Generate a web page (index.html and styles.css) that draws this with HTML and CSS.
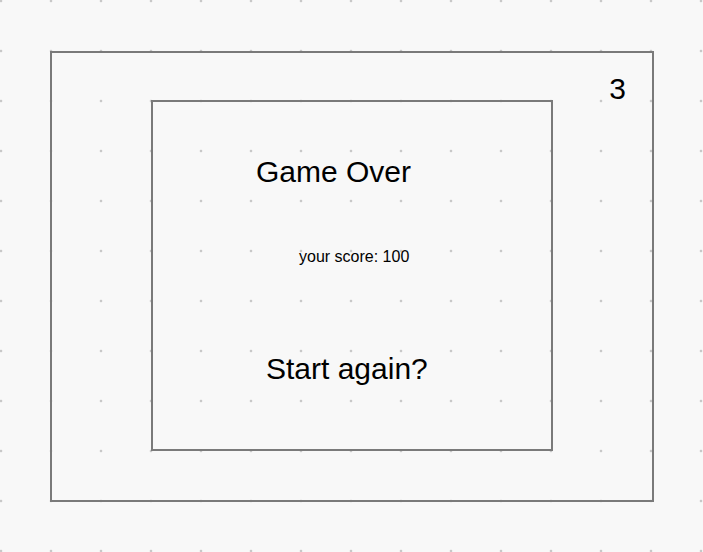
FILE: index.html
```html
<!DOCTYPE html>
<html>
<head>
<meta charset="utf-8">
<link rel="stylesheet" href="styles.css">
</head>
<body>
<div class="board">
  <div class="counter">3</div>
  <div class="dialog">
    <div class="title">Game Over</div>
    <div class="score">your score: 100</div>
    <div class="again">Start again?</div>
  </div>
</div>
</body>
</html>
```
FILE: styles.css
```css
html, body {
  margin: 0;
  padding: 0;
  height: 100%;
}
body {
  background-color: #f8f8f8;
  background-image: radial-gradient(circle, #c8c8c8 1px, rgba(200,200,200,0) 1.7px);
  background-size: 50px 50px;
  background-position: -24px -24px;
  font-family: "Liberation Sans", Arial, sans-serif;
  color: #000;
  overflow: hidden;
}
.board {
  position: relative;
  margin: 51px 0 0 50px;
  width: 600px;
  height: 447px;
  border: 2px solid #7a7a7a;
  padding: 0;
  box-sizing: content-box;
}
.counter {
  position: absolute;
  top: 18px;
  right: 26px;
  font-size: 30px;
  line-height: 36px;
}
.dialog {
  margin: 47px 0 0 99px;
  width: 398px;
  height: 347px;
  border: 2px solid #7a7a7a;
  display: flex;
  flex-direction: column;
}
.title {
  font-size: 30px;
  line-height: 36px;
  margin-top: 52px;
  padding-left: 103px;
}
.score {
  font-size: 16px;
  line-height: 20px;
  margin-top: 57px;
  padding-left: 146px;
}
.again {
  font-size: 30px;
  line-height: 36px;
  margin-top: 84px;
  padding-left: 113px;
}
```
